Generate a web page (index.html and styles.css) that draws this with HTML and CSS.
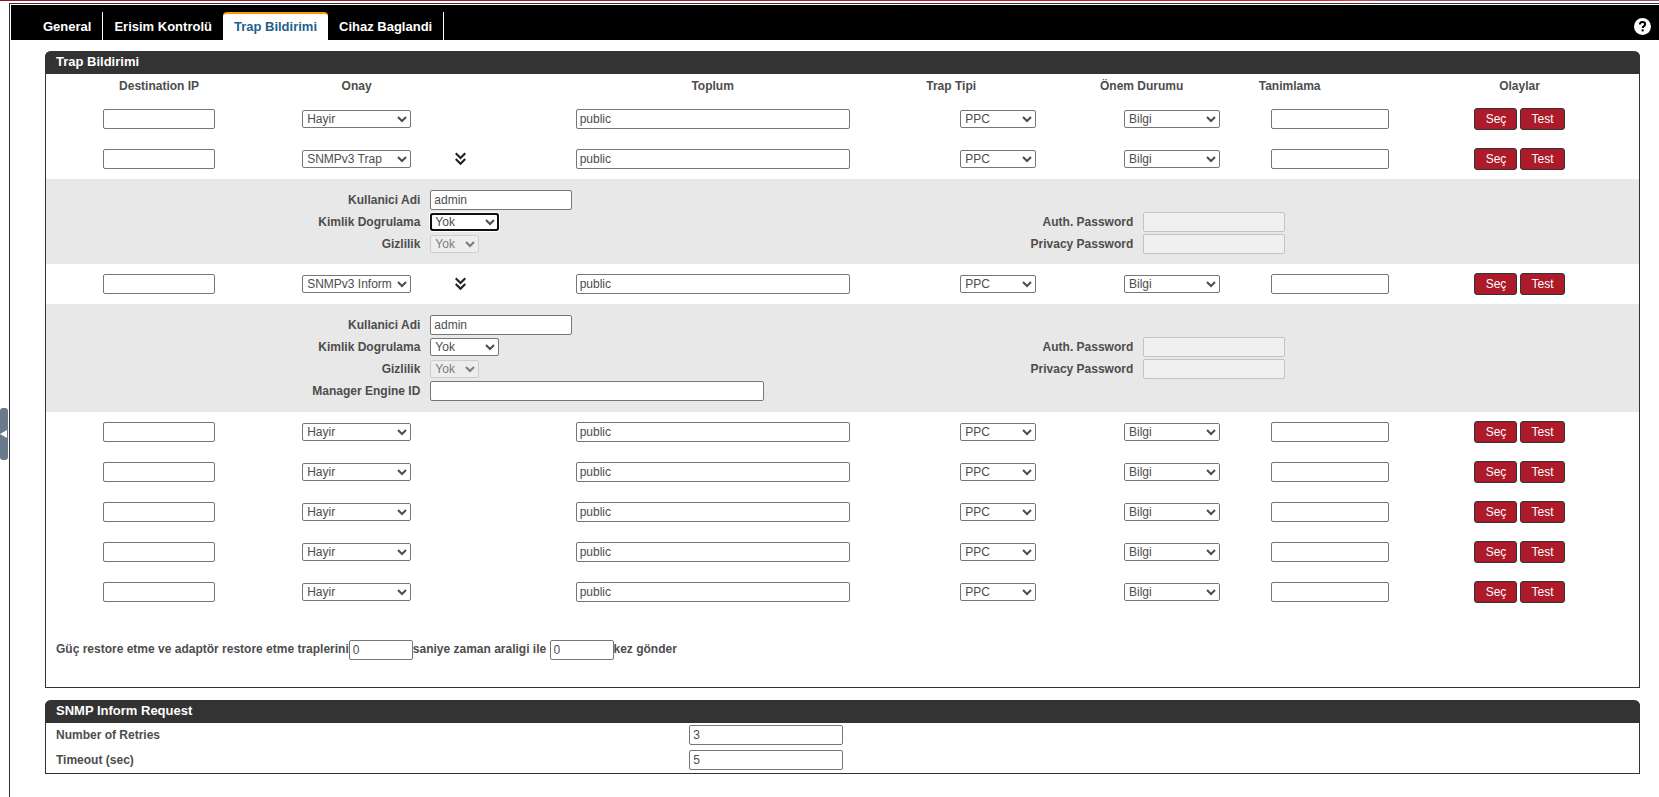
FILE: index.html
```html
<!DOCTYPE html>
<html lang="tr">
  <head>
    <meta charset="UTF-8" />
    <meta name="viewport" content="width=device-width, initial-scale=1.0" />
    <title>Trap Bildirimi</title>
    <link rel="stylesheet" href="styles.css">
  </head>
  <body>
    <div class="stripe"></div>
    <div class="layout">
      <div class="side">
        <button class="side-toggle" type="button" aria-label="Menü">
          <svg width="7" height="8" viewBox="0 0 7 8"><path d="M7 0v8L0 4z" fill="#fff" /></svg>
        </button>
      </div>
      <main class="main">
        <nav class="tabs">
          <a href="#">General</a>
          <a href="#">Erisim Kontrolü</a>
          <a href="#" class="active">Trap Bildirimi</a>
          <a href="#">Cihaz Baglandi</a>
          <button class="help" type="button" aria-label="Help">
            <svg width="17" height="17" viewBox="0 0 17 17">
              <circle cx="8.5" cy="8.5" r="8.5" fill="#fff" />
              <path d="M5.9 6.5C6 4.9 7 4.1 8.5 4.1s2.6.9 2.6 2.2c0 1.9-2.4 1.8-2.4 3.7" fill="none" stroke="#000" stroke-width="2" />
              <path d="M7.6 11.3h2.1v2.1H7.6z" />
            </svg>
          </button>
        </nav>

        <form class="content">
          <section class="panel">
            <h2>Trap Bildirimi</h2>
            <table class="traps">
              <colgroup>
                <col class="col-ip"><col class="col-onay"><col class="col-more"><col class="col-toplum">
                <col class="col-tip"><col class="col-onem"><col class="col-tanim"><col>
              </colgroup>
              <thead>
                <tr>
                  <th>Destination IP</th>
                  <th>Onay</th>
                  <th></th>
                  <th>Toplum</th>
                  <th class="tip">Trap Tipi</th>
                  <th class="onem">Önem Durumu</th>
                  <th class="tanim">Tanimlama</th>
                  <th>Olaylar</th>
                </tr>
              </thead>
              <tbody id="rows"></tbody>
            </table>
            <div class="restore">
              <label for="interval">Güç restore etme ve adaptör restore etme traplerini</label><input id="interval" type="text" value="0"><label for="times">saniye zaman araligi ile&nbsp;</label><input id="times" type="text" value="0"><span>kez gönder</span>
            </div>
          </section>

          <section class="panel">
            <h2>SNMP Inform Request</h2>
            <div class="inform">
              <label for="retries">Number of Retries</label>
              <input id="retries" type="text" value="3">
              <label for="timeout">Timeout (sec)</label>
              <input id="timeout" type="text" value="5">
            </div>
          </section>
        </form>
      </main>
    </div>
    <script src="script.js"></script>
  </body>
</html>
```
FILE: styles.css
```css
* {
  box-sizing: border-box;
}
body {
  margin: 0;
  background-color: #fff;
  color: #4d4d4d;
  font: bold 12px/16px "Liberation Sans", Arial, sans-serif;
}
.stripe {
  height: 1px;
  margin-bottom: 2px;
  background: linear-gradient(to right, #8b1a2b, #a51c30 40%, #d81e3a 79%, #e04458 82%, #a05058 83%);
}
.layout {
  display: flex;
  min-height: calc(100vh - 3px);
}
.side {
  display: flex;
  align-items: center;
  width: 9px;
  padding-top: 67px;
}
.side-toggle {
  display: flex;
  align-items: center;
  width: 8px;
  height: 52px;
  padding: 0;
  border: 0;
  border-radius: 3px;
  background-color: #6a7a8c;
}
.main {
  flex: 1;
  min-width: 0;
  padding: 1px 0 0 1px;
  border-top: 1px solid #333;
  border-left: 1px solid #333;
}

/* tabs */
.tabs {
  display: flex;
  align-items: flex-end;
  height: 35px;
  padding-left: 21px;
  background-color: #000;
}
.tabs a {
  height: 28px;
  padding: 2px 11px 0;
  border-right: 1px solid #fff;
  color: #fff;
  font-size: 13px;
  line-height: 26px;
  text-decoration: none;
}
.tabs a:nth-child(2) {
  border-right: 0;
}
.tabs .active {
  padding-top: 0;
  border-top: 2px solid #f90;
  border-right: 0;
  border-radius: 4px 4px 0 0;
  background-color: #fff;
  color: #1f5f8b;
}
.help {
  display: flex;
  align-self: center;
  margin: 8px 8px 0 auto;
  padding: 0;
  border: 0;
  background: none;
}

/* panels */
.content {
  padding: 11px 19px 0 34px;
}
.panel {
  margin-bottom: 12px;
  border: 1px solid #333;
  border-top: 0;
  border-radius: 6px 6px 0 0;
}
.panel h2 {
  height: 23px;
  margin: 0 -1px;
  padding-left: 11px;
  border-radius: 6px 6px 0 0;
  background-color: #333;
  color: #fff;
  font-size: 13px;
  line-height: 22px;
}
input,
select,
.traps button {
  margin: 0;
  color: #4d4d4d;
  font: 12px "Liberation Sans", Arial, sans-serif;
}
input {
  height: 20px;
  padding: 1px 3px;
  border: 1px solid #767676;
  border-radius: 2px;
}
select {
  height: 18px;
  border: 1px solid #767676;
  border-radius: 2px;
  background-color: #fff;
}
input:disabled,
select:disabled {
  border-color: #c3c3c3;
  background-color: #f0f0f0;
}

.traps {
  width: 100%;
  table-layout: fixed;
  border-collapse: collapse;
}
.col-ip { width: 14.2%; }
.col-onay { width: 10.6%; }
.col-more { width: 6.4%; }
.col-toplum { width: 21.3%; }
.col-tip { width: 12.6%; }
.col-onem { width: 9.9%; }
.col-tanim { width: 10%; }
.traps th {
  height: 25px;
  padding: 0 0 1px;
}
.traps td {
  height: 40px;
  padding: 0;
  text-align: center;
  vertical-align: middle;
}
.traps td > * {
  vertical-align: middle;
}
.traps th.tip,
.traps th.onem,
.traps th.tanim,
.traps td.tip,
.traps td.onem,
.traps td.tanim,
.traps td.more {
  text-align: left;
}
.traps th.tip { padding-left: 44px; }
.traps th.onem { padding-left: 17px; }
.traps th.tanim { padding-left: 18px; }
.traps td.more { padding-left: 14px; }
.traps td.tip { padding-left: 78px; }
.traps td.onem { padding-left: 41px; }
.traps td.tanim { padding-left: 30px; }
td.ip input { width: 112px; }
td.onay select { width: 109px; }
td.toplum input { width: 274px; }
td.tip select { width: 76px; }
td.onem select { width: 96px; }
td.tanim input { width: 118px; }
.traps td.more button {
  display: block;
  padding: 0;
  border: 0;
  background: none;
}
.more svg {
  display: block;
}
.olay button {
  min-width: 43px;
  height: 22px;
  padding: 0 10px;
  border: 1px solid #333;
  border-radius: 3px;
  background-color: #ad1a29;
  color: #fff;
}
.olay button + button {
  margin-left: 3px;
}

/* SNMPv3 settings under a row */
.details {
  display: grid;
  grid-template-columns: 23.5% 30% 13.5% 1fr;
  grid-auto-rows: 22px;
  align-items: center;
  column-gap: 10px;
  padding: 10px 0 9px;
  background-color: #e8e8e8;
  text-align: left;
}
.details.has-engine {
  padding-bottom: 10px;
}
.details label {
  grid-column: 1;
  text-align: right;
}
.details input { width: 142px; }
.details .auth { width: 69px; }
.details .priv { width: 49px; }
.details .engine { width: 334px; }
.details .pass-label {
  grid-column: 3;
}
.details .current {
  border-color: #101010;
  border-radius: 3px;
  outline: 2px solid #101010;
  outline-offset: -2px;
  box-shadow: 0 0 0 1px #fff;
}

.restore {
  display: flex;
  align-items: center;
  padding: 28px 10px 27px;
}
.restore label,
.restore span {
  padding-bottom: 2px;
}
.restore input {
  width: 64px;
}
.inform {
  display: grid;
  grid-template-columns: 40% 154px;
  align-items: center;
  row-gap: 5px;
  padding: 2px 0 3px 10px;
}
```
FILE: script.js
```js
const $ = query => document.querySelector(query)

const rows = [
  { onay: 'Hayir' },
  { onay: 'SNMPv3 Trap', current: true },
  { onay: 'SNMPv3 Inform', engine: true },
  { onay: 'Hayir' },
  { onay: 'Hayir' },
  { onay: 'Hayir' },
  { onay: 'Hayir' },
  { onay: 'Hayir' }
]

const options = (list, selected) =>
  list.map(o => `<option${o === selected ? ' selected' : ''}>${o}</option>`).join('')

const more = `
  <button type="button" aria-label="SNMPv3">
    <svg width="11" height="14" viewBox="0 0 11 14" fill="none" stroke="#222" stroke-width="2.2">
      <path d="M0.7 1.2L5.5 6l4.8-4.8M0.7 7L5.5 11.8 10.3 7" />
    </svg>
  </button>`

const details = (row, i) => `
  <tr>
    <td colspan="8">
      <div class="details${row.engine ? ' has-engine' : ''}">
        <label for="user${i}">Kullanici Adi</label>
        <input id="user${i}" type="text" value="admin">
        <label for="auth${i}">Kimlik Dogrulama</label>
        <select id="auth${i}" class="auth${row.current ? ' current' : ''}">${options(['Yok', 'MD5', 'SHA'])}</select>
        <label for="authpw${i}" class="pass-label">Auth. Password</label>
        <input id="authpw${i}" type="password" disabled>
        <label for="priv${i}">Gizlilik</label>
        <select id="priv${i}" class="priv" disabled>${options(['Yok'])}</select>
        <label for="privpw${i}" class="pass-label">Privacy Password</label>
        <input id="privpw${i}" type="password" disabled>
        ${row.engine ? `<label for="engine${i}">Manager Engine ID</label><input id="engine${i}" class="engine" type="text">` : ''}
      </div>
    </td>
  </tr>`

$('#rows').innerHTML = rows.map((row, i) => {
  const v3 = row.onay !== 'Hayir'
  return `
  <tr>
    <td class="ip"><input type="text" aria-label="Destination IP"></td>
    <td class="onay"><select aria-label="Onay">${options(['Hayir', 'SNMPv3 Trap', 'SNMPv3 Inform'], row.onay)}</select></td>
    <td class="more">${v3 ? more : ''}</td>
    <td class="toplum"><input type="text" aria-label="Toplum" value="public"></td>
    <td class="tip"><select aria-label="Trap Tipi">${options(['PPC'])}</select></td>
    <td class="onem"><select aria-label="Önem Durumu">${options(['Bilgi'])}</select></td>
    <td class="tanim"><input type="text" aria-label="Tanimlama"></td>
    <td class="olay"><button type="button">Seç</button><button type="button">Test</button></td>
  </tr>${v3 ? details(row, i) : ''}`
}).join('')
```
